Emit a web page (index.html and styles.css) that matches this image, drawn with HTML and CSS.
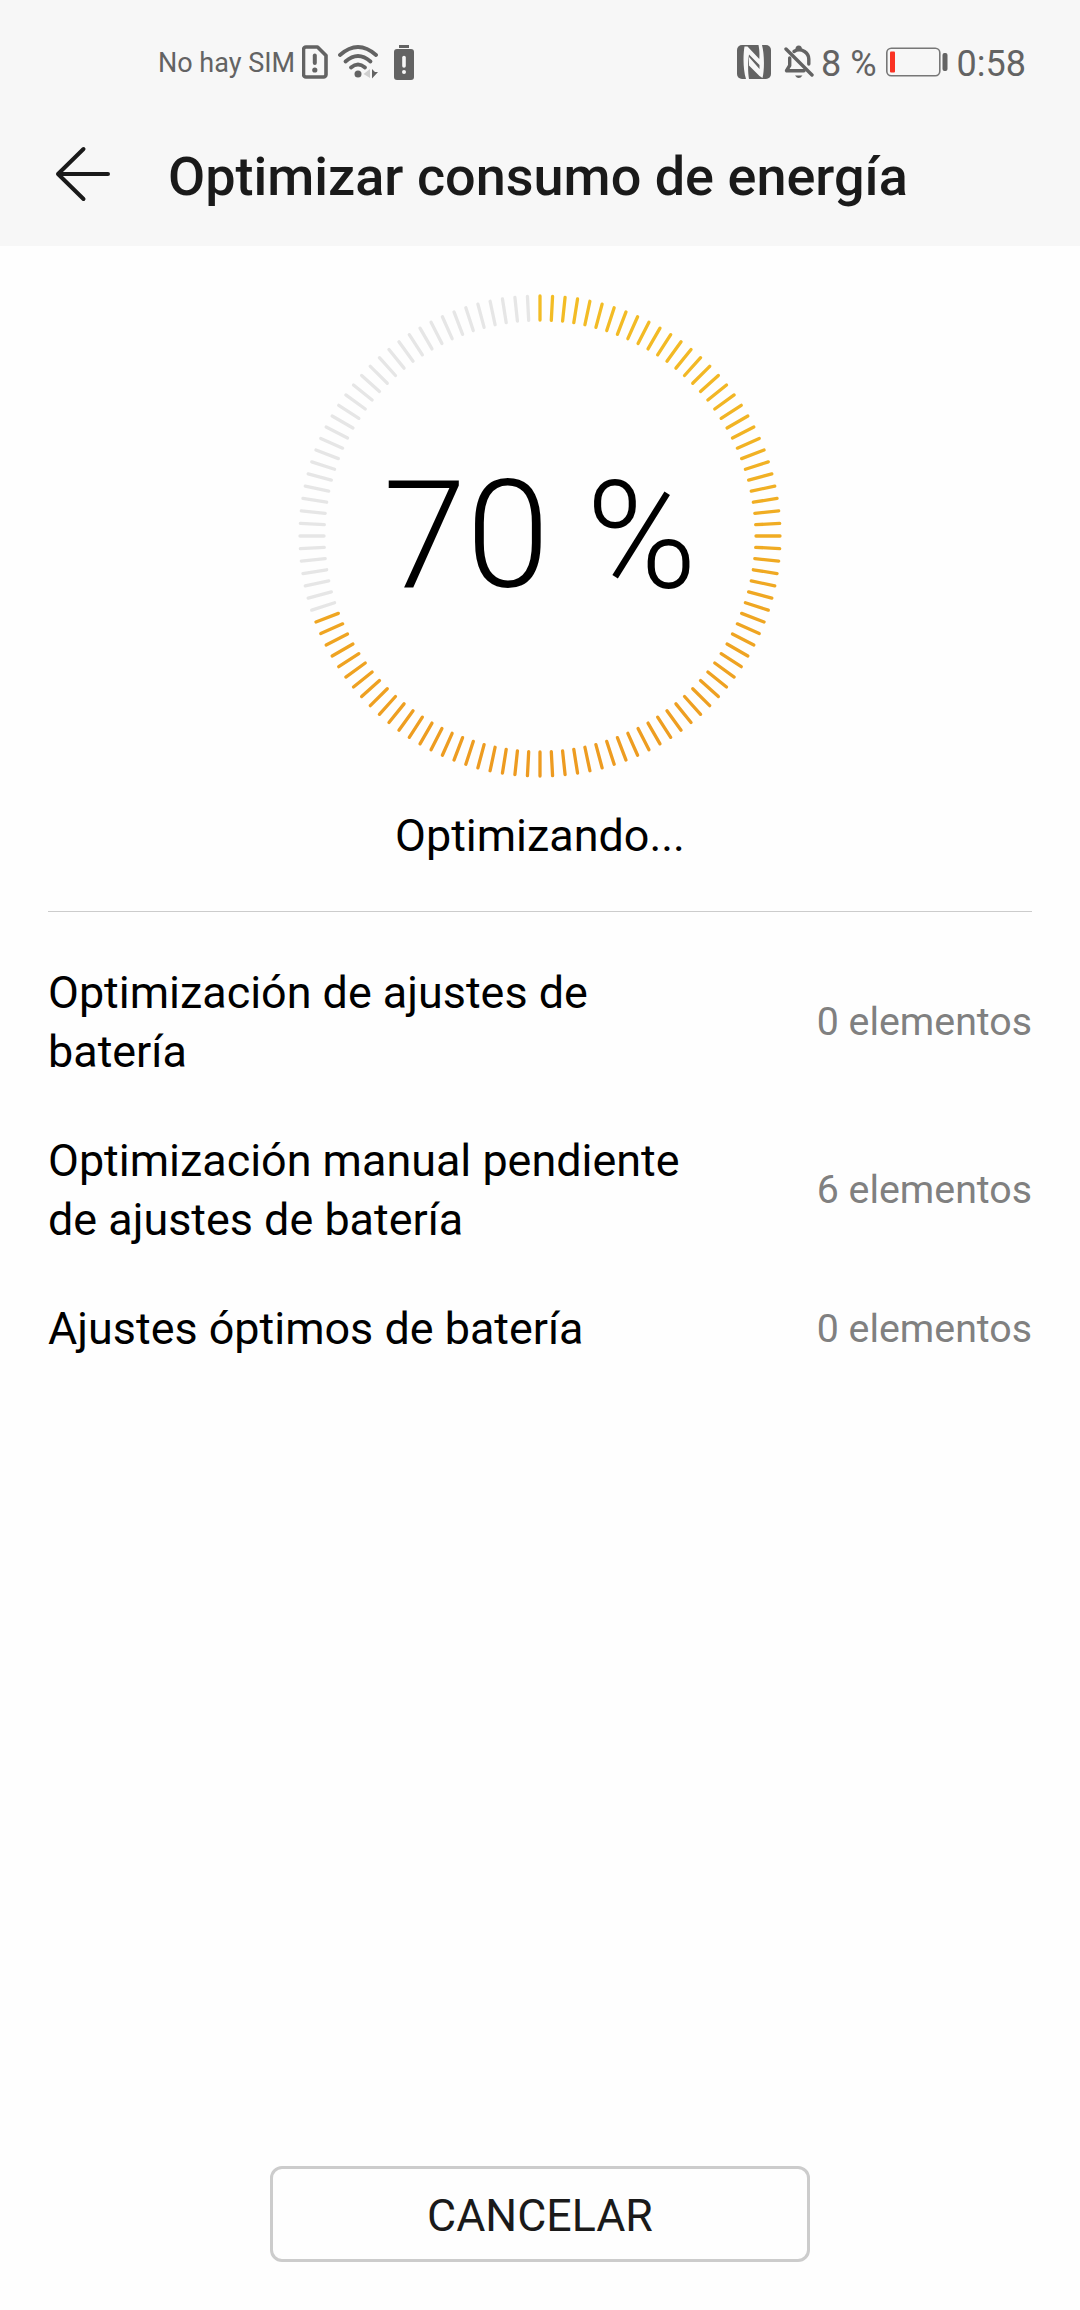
FILE: index.html
```html
<!DOCTYPE html>
<html lang="es">
<head>
<meta charset="utf-8">
<title>Optimizar consumo de energía</title>
<link rel="stylesheet" href="styles.css">
</head>
<body>
<div class="screen">
  <header class="top">
    <div class="status">
      <div class="status-left">
        <span class="carrier">No hay SIM</span>
        <svg class="sim" width="26" height="34" viewBox="0 0 26 34"><path d="M4 2H15.500L24 10.500V29.500a2.500 2.500 0 0 1-2.500 2.500H4a2.500 2.500 0 0 1-2.500-2.500V4.500A2.500 2.500 0 0 1 4 2Z" fill="none" stroke="#636363" stroke-width="3.600" stroke-linejoin="round"/><path d="M12.800 10.500V18" stroke="#636363" stroke-width="4" stroke-linecap="round"/><circle cx="12.800" cy="25" r="2.600" fill="#636363"/></svg>
        <svg class="wifi" width="40" height="34" viewBox="0 0 40 34"><g fill="none" stroke="#636363" stroke-width="3.800" stroke-linecap="round"><path d="M2 10Q20-6 38 10"/><path d="M7.500 16.500Q20 5.500 32.500 16.500"/><path d="M13 22.500Q20 16.500 27 22.500"/></g><circle cx="20" cy="29" r="3.500" fill="#636363"/><path d="M25.500 29L32 24V33Z" fill="#cfcfcf"/><path d="M34 24V33.500L40 27H37Z" fill="#636363"/></svg>
        <svg class="low" width="20" height="35" viewBox="0 0 20 35"><path d="M5 1.500H15" stroke="#636363" stroke-width="3"/><rect y="4" width="20" height="31" rx="3" fill="#636363"/><path d="M10 12.500V21" stroke="#f7f7f7" stroke-width="3.600" stroke-linecap="round"/><circle cx="10" cy="27" r="2" fill="#f7f7f7"/></svg>
      </div>
      <div class="status-right">
        <svg class="nfc" width="34" height="34" viewBox="0 0 34 34"><rect width="34" height="34" rx="5" fill="#636363"/><path d="M7.500 1.500L10.500 1.500L22.300 14C22.600 9 22.500 5 21.500 0H25C27.500 9 27.500 25 25.500 33L22.500 31L12 20.500V12L22.500 24V20L12 9.500C10.800 17 10.800 27 12 34H9C6 25 6 10 7.500 1.500Z" fill="#f7f7f7" fill-rule="nonzero"/></svg>
        <svg class="bell" width="30" height="34" viewBox="0 0 30 34"><g fill="none" stroke="#636363" stroke-width="3.400" stroke-linecap="round" stroke-linejoin="round"><path d="M2 4L28 30"/><path d="M5.700 13V20.500L2.500 25.700H20"/><path d="M10 6.500Q15 3 20.500 6.500Q24.800 9.500 24.800 14V19"/></g><path d="M11.500 4a3.200 3.500 0 0 1 6.400 0Z" fill="#636363"/><path d="M11 30.500H18.500Q14.700 35.500 11 30.500Z" fill="#636363"/></svg>
        <span class="percent">8 %</span>
        <svg class="battery" width="62" height="30" viewBox="0 0 62 30"><rect x=".8" y="1.300" width="53" height="27.500" rx="4.500" fill="none" stroke="#777" stroke-width="1.600"/><rect x="4" y="4.500" width="5" height="21" rx="1" fill="#fa3223"/><rect x="56.500" y="6" width="5" height="18" rx="2" fill="#636363"/></svg>
        <span class="clock">0:58</span>
      </div>
    </div>
    <div class="titlebar">
      <svg class="back" width="56" height="56" viewBox="0 0 56 56"><path d="M53 28H3M28.500 3L3 28L28.500 53" fill="none" stroke="#1a1a1a" stroke-width="4" stroke-linecap="round" stroke-linejoin="round"/></svg>
      <h1>Optimizar consumo de energía</h1>
    </div>
  </header>
  <section class="progress">
    <div class="dial">
      <svg id="ticks" class="ticks" width="484" height="484" viewBox="-242 -242 484 484" data-value="70">
        <defs><linearGradient id="amber" gradientUnits="userSpaceOnUse" x1="0" y1="-242" x2="0" y2="242"><stop offset="0" stop-color="#f3bd25"/><stop offset="1" stop-color="#ed9a20"/></linearGradient></defs>
      </svg>
      <span class="value">70 %</span>
    </div>
    <p class="state">Optimizando...</p>
  </section>
  <ul class="results">
    <li><span class="name">Optimización de ajustes de batería</span><span class="count">0 elementos</span></li>
    <li><span class="name">Optimización manual pendiente de ajustes de batería</span><span class="count">6 elementos</span></li>
    <li><span class="name">Ajustes óptimos de batería</span><span class="count">0 elementos</span></li>
  </ul>
  <button class="cancel">CANCELAR</button>
</div>
<script src="dial.js"></script>
</body>
</html>
```
FILE: styles.css
```css
* { box-sizing: border-box; }
body { margin: 0; background: #fefefe; font-family: Roboto, sans-serif; color: #000; }
svg { display: block; flex: none; }
.screen { width: 1080px; height: 2310px; display: flex; flex-direction: column; }
.top { height: 246px; background: #f7f7f7; flex: none; }
.status { height: 124px; padding: 0 54px 0 158px; display: flex; justify-content: space-between; color: #636363; white-space: nowrap; }
.status-left, .status-right { display: flex; align-items: center; }
.carrier { font-size: 27px; width: 144px; padding-top: 2px; }
.wifi { margin-left: 10px; }
.low { margin-left: 16px; }
.bell { margin-left: 13px; }
.percent { font-size: 36px; margin-left: 7px; padding-top: 3px; }
.battery { margin-left: 9px; }
.clock { font-size: 36px; margin-left: 9px; padding-top: 3px; }
.titlebar { height: 122px; display: flex; padding-left: 55px; }
.back { margin-top: 22px; }
h1 { margin: 21px 0 0 57px; font-size: 54px; line-height: 64px; font-weight: 500; color: #1a1a1a; white-space: nowrap; }
.progress { margin: 0 48px; height: 666px; padding-top: 48px; border-bottom: 1px solid #ccc; display: flex; flex-direction: column; align-items: center; flex: none; }
.dial { display: grid; place-items: center; width: 484px; height: 484px; }
.ticks, .value { grid-area: 1 / 1; }
.ticks line { stroke: #e6e6e6; stroke-width: 3.300px; stroke-linecap: round; }
.ticks .on { stroke: url(#amber); }
.value { font-size: 150px; font-weight: 300; line-height: 176px; white-space: nowrap; }
.state { margin: 28px 0 0; font-size: 44.900px; line-height: 59px; }
.results { list-style: none; margin: 51px 48px 0; padding: 0; display: flex; flex-direction: column; gap: 50px; }
.results li { display: flex; justify-content: space-between; align-items: center; }
.name { width: 650px; font-size: 44.900px; line-height: 59px; }
.count { font-size: 39.300px; color: #808080; white-space: nowrap; }
.cancel { margin: auto auto 48px; width: 540px; height: 96px; border: 3px solid #ccc; border-radius: 12px; background: #fefefe; color: #1a1a1a; font: 44.700px Roboto, sans-serif; padding: 3px 0 0; }
```
FILE: dial.js
```js
const dial = document.getElementById("ticks");
const total = 120;
const filled = total * dial.dataset.value / 100;
for (let i = 0; i < total; i++) {
  const a = i * 2 * Math.PI / total;
  const line = document.createElementNS("http://www.w3.org/2000/svg", "line");
  line.setAttribute("x1", Math.sin(a) * 216);
  line.setAttribute("y1", -Math.cos(a) * 216);
  line.setAttribute("x2", Math.sin(a) * 240);
  line.setAttribute("y2", -Math.cos(a) * 240);
  if (i < filled) line.setAttribute("class", "on");
  dial.appendChild(line);
}
```
